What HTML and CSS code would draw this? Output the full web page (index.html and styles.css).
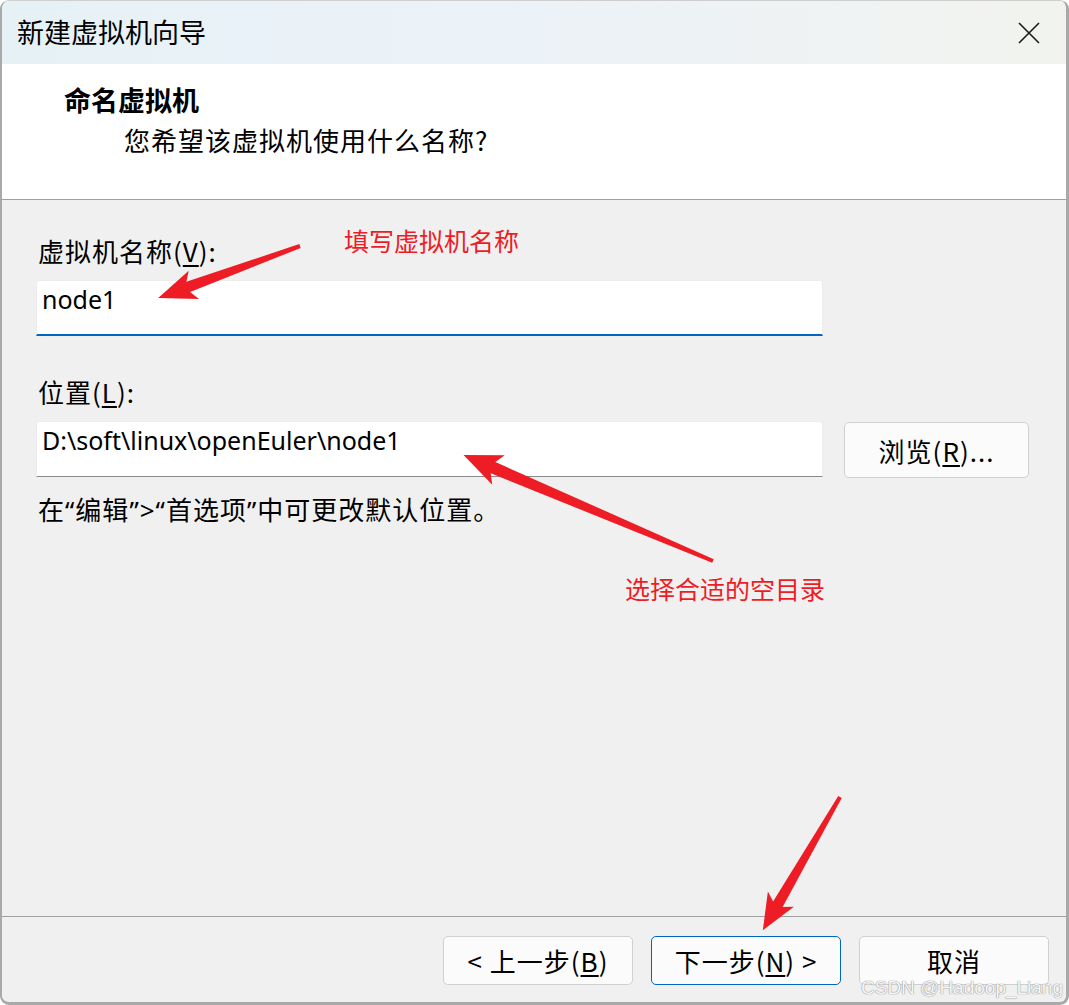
FILE: index.html
```html
<!DOCTYPE html>
<html lang="zh-CN">
<head>
    <meta charset="UTF-8">
    <title>新建虚拟机向导</title>
    <link rel="stylesheet" href="styles.css">
</head>
<body>
    <div class="wizard-window">
        <div class="title-bar">
            <span class="title-text">新建虚拟机向导</span>
            <svg class="close-icon" width="22" height="22" viewBox="0 0 22 22">
                <path d="M1 1 L21 21 M21 1 L1 21" stroke="#1a1a1a" stroke-width="1.6" fill="none"/>
            </svg>
        </div>

        <div class="wizard-header">
            <div class="header-title">命名虚拟机</div>
            <div class="header-sub">您希望该虚拟机使用什么名称?</div>
        </div>

        <div class="wizard-body">
            <div class="field-label">虚拟机名称(<u>V</u>):</div>
            <div class="text-input focused">node1</div>

            <div class="field-label location-label">位置(<u>L</u>):</div>
            <div class="location-row">
                <div class="text-input">D:\soft\linux\openEuler\node1</div>
                <button class="dlg-button browse-button">浏览(<u>R</u>)...</button>
            </div>
            <div class="hint">在<span class="q">“</span>编辑<span class="q">”&gt;“</span>首选项<span class="q">”</span>中可更改默认位置。</div>
        </div>

        <div class="wizard-footer">
            <button class="dlg-button">&lt; 上一步(<u>B</u>)</button>
            <button class="dlg-button primary">下一步(<u>N</u>) &gt;</button>
            <button class="dlg-button">取消</button>
        </div>
    </div>

    <!-- annotations drawn on top of the screenshot -->
    <div class="note note-name">填写虚拟机名称</div>
    <div class="note note-dir">选择合适的空目录</div>
    <svg class="arrows" width="1069" height="1005" viewBox="0 0 1069 1005">
        <g fill="#ee1c25">
            <polygon transform="translate(300,246) rotate(159.9)" points="0,-2 119,-5.5 113,-15 151,0 113,15 119,5.5 0,2"/>
            <polygon transform="translate(713,561) rotate(-157)" points="0,-2 239,-6 233,-16 271,0 233,16 239,6 0,2"/>
            <polygon transform="translate(840,797) rotate(120.07)" points="0,-2 124,-5.5 118,-15 154,0 118,15 124,5.5 0,2"/>
        </g>
    </svg>
    <div class="watermark">CSDN @Hadoop_Liang</div>
</body>
</html>
```

FILE: styles.css
```css
body {
    margin: 0;
    width: 1069px;
    height: 1005px;
    background: #ffffff;
    font-family: "Noto Sans CJK SC", "Noto Sans", sans-serif;
    color: #000;
    position: relative;
    overflow: hidden;
}

.wizard-window {
    box-sizing: border-box;
    width: 1069px;
    height: 1005px;
    border-top: 1px solid #cfcfcf;
    border-left: 2px solid #a9a9a9;
    border-right: 3px solid #a9a9a9;
    border-bottom: 3px solid #a9a9a9;
    border-radius: 9px;
    overflow: hidden;
    display: flex;
    flex-direction: column;
    background: #f0f0f0;
}

.title-bar {
    height: 63px;
    flex-shrink: 0;
    display: flex;
    align-items: center;
    justify-content: space-between;
    padding: 0 26px 0 15px;
    background: linear-gradient(90deg, #e6f1f6 0%, #ebf2f8 45%, #f2f3ef 100%);
}

.title-text {
    font-size: 27px;
    line-height: 34px;
    margin-top: -1px;
}

.close-icon {
    display: block;
}

.wizard-header {
    height: 135px;
    flex-shrink: 0;
    box-sizing: content-box;
    background: #ffffff;
    border-bottom: 1px solid #a0a0a0;
    padding-left: 62px;
}

.header-title {
    margin-top: 19px;
    font-size: 27px;
    line-height: 34px;
    font-weight: 600;
}

.header-sub {
    margin-top: 6px;
    margin-left: 60px;
    font-size: 26px;
    line-height: 34px;
    letter-spacing: 1px;
}

.wizard-body {
    flex: 1;
    padding: 34px 0 0 34px;
}

.field-label {
    font-size: 26px;
    line-height: 34px;
    padding-left: 2px;
    letter-spacing: 1px;
}

.field-label u,
.dlg-button u {
    text-underline-offset: 3px;
}

.text-input {
    box-sizing: border-box;
    width: 787px;
    height: 56px;
    margin-top: 12px;
    padding: 1px 5px 0;
    background: #ffffff;
    border: 1px solid #ececec;
    border-bottom: 1px solid #8a8a8a;
    border-radius: 3px 3px 0 0;
    font-family: "Noto Sans", "Liberation Sans", sans-serif;
    font-size: 25px;
    line-height: 34px;
}

.text-input.focused {
    border-bottom: 2px solid #0067c0;
}

.location-label {
    margin-top: 39px;
}

.location-row {
    display: flex;
    align-items: flex-start;
    gap: 21px;
}

.location-row .text-input {
    margin-top: 12px;
}

.dlg-button {
    box-sizing: border-box;
    height: 49px;
    width: 190px;
    padding: 0;
    background: #fbfbfb;
    border: 1px solid #d0d0d0;
    border-radius: 5px;
    font-family: "Noto Sans CJK SC", "Noto Sans", sans-serif;
    font-size: 26px;
    line-height: 34px;
    letter-spacing: 1px;
    color: #000;
}

.dlg-button.primary {
    border: 1px solid #0067c0;
}

.browse-button {
    width: 185px;
    height: 56px;
    margin-top: 13px;
    padding-top: 2px;
}

.hint {
    margin-top: 14px;
    padding-left: 2px;
    font-size: 26px;
    line-height: 34px;
    letter-spacing: 1px;
}

.hint .q {
    font-family: "Noto Sans", sans-serif;
}

.wizard-footer {
    flex-shrink: 0;
    border-top: 1px solid #a0a0a0;
    padding: 19px 17px 17px 0;
    display: flex;
    justify-content: flex-end;
    gap: 18px;
}

.note {
    position: absolute;
    color: #ee1c25;
    font-size: 25px;
    line-height: 34px;
}

.note-name {
    left: 344px;
    top: 223px;
}

.note-dir {
    left: 625px;
    top: 571px;
}

.arrows {
    position: absolute;
    left: 0;
    top: 0;
    pointer-events: none;
}

.watermark {
    position: absolute;
    right: 6px;
    top: 976px;
    font-family: "Liberation Sans", Arial, sans-serif;
    font-size: 19px;
    line-height: 24px;
    color: #f7f7f7;
    text-shadow: 0 0 1px #8a8a8a, 0 0 1px #8a8a8a;
}
```
